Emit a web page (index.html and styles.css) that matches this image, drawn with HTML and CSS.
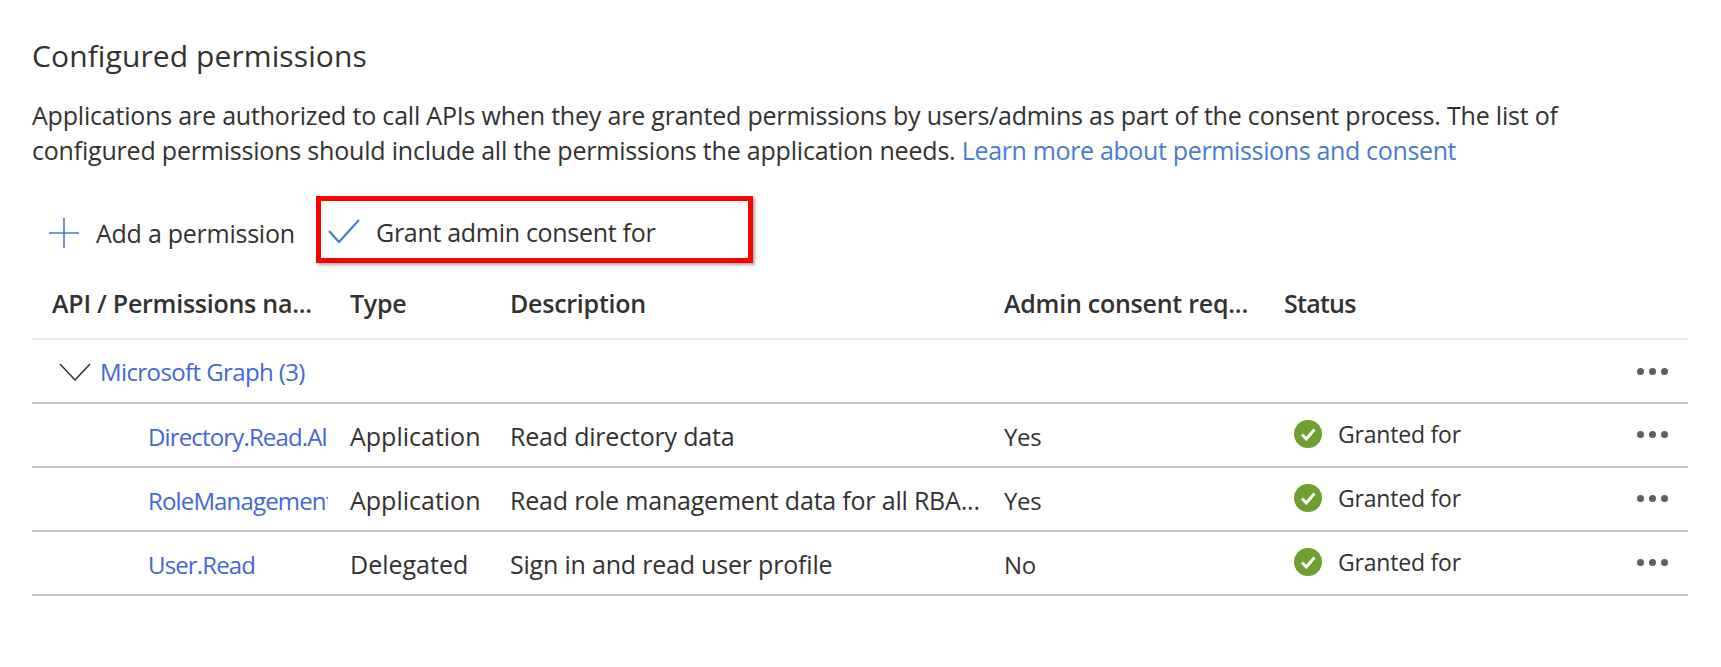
FILE: index.html
```html
<!DOCTYPE html>
<html lang="en">
<head>
<meta charset="utf-8">
<title>Configured permissions</title>
<link rel="stylesheet" href="styles.css">
</head>
<body>
<main class="page">
  <h2 class="title">Configured permissions</h2>
  <p class="intro">Applications are authorized to call APIs when they are granted permissions by users/admins as part of the consent process. The list of configured permissions should include all the permissions the application needs. <a class="learn" href="#">Learn more about permissions and consent</a></p>
  <div class="toolbar">
    <button class="tool tool-add" type="button">
      <svg class="plus" width="30" height="30" viewBox="0 0 30 30"><path d="M15 0V30M0 15H30" fill="none" stroke="#4a7bd0" stroke-width="1.6"/></svg>
      <span>Add a permission</span>
    </button>
    <button class="tool tool-grant" type="button">
      <svg class="check" width="32" height="24" viewBox="0 0 32 24"><path d="M1 12L11 23L31 1" fill="none" stroke="#4a7bd0" stroke-width="2.2"/></svg>
      <span>Grant admin consent for</span>
    </button>
  </div>
  <div class="table">
    <div class="row head">
      <div class="c name">API / Permissions na...</div>
      <div class="c">Type</div>
      <div class="c">Description</div>
      <div class="c">Admin consent req...</div>
      <div class="c status-head">Status</div>
      <div class="c"></div>
    </div>
    <div class="row group">
      <div class="c name wide">
        <svg class="chev" width="32" height="18" viewBox="0 0 32 18"><path d="M1 1L16 17L31 1" fill="none" stroke="#323130" stroke-width="1.5"/></svg>
        <a class="link" href="#">Microsoft Graph (3)</a>
      </div>
      <div class="c dots"><i></i><i></i><i></i></div>
    </div>
    <div class="row item">
      <div class="c perm"><a class="link" href="#">Directory.Read.All</a></div>
      <div class="c type">Application</div>
      <div class="c">Read directory data</div>
      <div class="c short">Yes</div>
      <div class="c status">
        <svg class="ok" width="28" height="28" viewBox="0 0 28 28"><circle cx="14" cy="14" r="14" fill="#6f9f2e"/><path d="M8 14.5L12.3 19L20.5 9.5" fill="none" stroke="#fff" stroke-width="3"/></svg>
        <span>Granted for</span>
      </div>
      <div class="c dots up"><i></i><i></i><i></i></div>
    </div>
    <div class="row item">
      <div class="c perm"><a class="link" href="#">RoleManagement.Read.Directory</a></div>
      <div class="c type">Application</div>
      <div class="c">Read role management data for all RBA...</div>
      <div class="c short">Yes</div>
      <div class="c status">
        <svg class="ok" width="28" height="28" viewBox="0 0 28 28"><circle cx="14" cy="14" r="14" fill="#6f9f2e"/><path d="M8 14.5L12.3 19L20.5 9.5" fill="none" stroke="#fff" stroke-width="3"/></svg>
        <span>Granted for</span>
      </div>
      <div class="c dots up"><i></i><i></i><i></i></div>
    </div>
    <div class="row item">
      <div class="c perm"><a class="link" href="#">User.Read</a></div>
      <div class="c type">Delegated</div>
      <div class="c">Sign in and read user profile</div>
      <div class="c short">No</div>
      <div class="c status">
        <svg class="ok" width="28" height="28" viewBox="0 0 28 28"><circle cx="14" cy="14" r="14" fill="#6f9f2e"/><path d="M8 14.5L12.3 19L20.5 9.5" fill="none" stroke="#fff" stroke-width="3"/></svg>
        <span>Granted for</span>
      </div>
      <div class="c dots up"><i></i><i></i><i></i></div>
    </div>
  </div>
</main>
</body>
</html>
```
FILE: styles.css
```css
* { box-sizing: border-box; }
html, body { margin: 0; background: #fff; }
body { font-family: "Open Sans", "Noto Sans", sans-serif; color: #323130; font-size: 25px; }
.page { width: 1721px; height: 667px; padding: 36px 33px 0 32px; overflow: hidden; }
.title { margin: 0; font-size: 30px; line-height: 40px; font-weight: 400; letter-spacing: 0.1px; }
.intro { margin: 22px 0 0; width: 1560px; font-size: 25px; line-height: 35px; letter-spacing: -0.2px; }
.learn { color: #4a7bd0; text-decoration: none; letter-spacing: -0.35px; }
.toolbar { display: flex; margin-top: 28px; height: 67px; }
.tool { display: flex; align-items: center; background: none; border: 0; padding: 7px 0 0; font: inherit; color: inherit; letter-spacing: -0.25px; }
.tool-add { width: 284px; padding-left: 17px; gap: 17px; }
.tool-grant { width: 437px; padding-left: 7px; padding-top: 4px; gap: 16px; border: 5px solid #f00; box-shadow: 2px 2px 3px rgba(0,0,0,.35); letter-spacing: -0.3px; }
.check { margin-bottom: 2px; }
.table { margin-top: 4px; }
.row { display: grid; grid-template-columns: 318px 160px 494px 280px 353px 51px; align-items: center; height: 64px; border-bottom: 2px solid #c8c8c8; letter-spacing: -0.2px; }
.row.head { font-weight: 600; height: 73px; border-bottom-color: #ebebeb; letter-spacing: -0.25px; }
.status-head { letter-spacing: -0.75px; }
.row.group { grid-template-columns: 1fr 51px; padding-top: 1px; }
.row.item { padding-top: 2px; }
.c { white-space: nowrap; min-width: 0; }
.name { padding-left: 20px; }
.wide { display: flex; align-items: center; padding-left: 27px; gap: 9px; }
.link { color: #4466d8; text-decoration: none; font-size: 24px; letter-spacing: -0.6px; }
.perm { padding-left: 116px; overflow: hidden; margin-right: 22px; }
.perm .link { letter-spacing: -0.85px; }
.type { letter-spacing: 0; }
.short { font-size: 24px; letter-spacing: -0.3px; }
.status { display: flex; align-items: center; gap: 16px; padding-left: 10px; position: relative; top: -2px; font-size: 23px; }
.ok { flex: none; }
.dots { display: flex; gap: 5px; justify-content: flex-start; }
.dots i { width: 7px; height: 7px; border-radius: 50%; background: #5f5e5d; }
.up { position: relative; top: -2px; }
```
